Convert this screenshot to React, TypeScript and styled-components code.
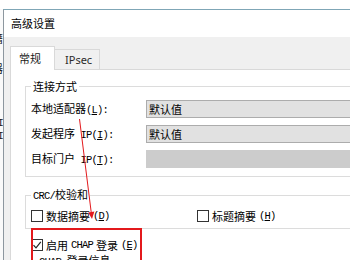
import React from 'react';
import styled, { createGlobalStyle } from 'styled-components';

const GlobalStyle = createGlobalStyle`
	html, body {
		margin: 0;
		padding: 0;
		background: #ffffff;
	}
	body {
		font-family: 'Noto Sans CJK SC', 'Noto Sans', sans-serif;
		color: #000;
	}
	* {
		box-sizing: border-box;
	}
`;

const Screen = styled.div`
	position: relative;
	width: 350px;
	height: 260px;
	overflow: hidden;
	display: flex;
	padding-top: 9px;
	background: #ffffff;
`;

// 后面窗口露出来的一小条
const BackStrip = styled.div`
	flex: none;
	width: 3px;
	overflow: hidden;
	display: flex;
	flex-direction: column;
	background: #fafafa;
`;

const BackGlyph = styled.span<{ $top: number }>`
	display: block;
	margin-top: ${(p) => p.$top}px;
	margin-left: -8px;
	font-size: 11px;
	line-height: 11px;
	white-space: nowrap;
	color: #222;
`;

const Dialog = styled.div`
	flex: 1;
	min-width: 0;
	display: flex;
	flex-direction: column;
	border-top: 1px solid #7fa6b6;
	border-left: 1px solid #8d979f;
`;

const TitleBar = styled.div`
	height: 27px;
	padding-left: 7px;
	background: #ffffff;
	font-size: 11px;
	line-height: 27px;
`;

const Body = styled.div`
	flex: 1;
	display: flex;
	flex-direction: column;
	padding-left: 6px;
	background: #f0f0f0;
`;

const TabStrip = styled.div`
	height: 32px;
	display: flex;
	align-items: flex-end;
`;

const Tab = styled.div<{ $active?: boolean }>`
	position: relative;
	z-index: ${(p) => (p.$active ? 1 : 0)};
	display: flex;
	align-items: center;
	height: ${(p) => (p.$active ? '24px' : '20px')};
	margin-bottom: ${(p) => (p.$active ? '-1px' : '0')};
	padding: ${(p) => (p.$active ? '0 0 2px 8px' : '0 0 0 10px')};
	width: 45px;
	background: ${(p) => (p.$active ? '#ffffff' : '#f0f0f0')};
	border: 1px solid #d9d9d9;
	border-bottom: none;
	border-left: ${(p) => (p.$active ? '1px solid #d9d9d9' : 'none')};
	font-size: 11px;
	color: #1a1a1a;
`;

const TabLatin = styled.span`
	font-family: 'Noto Sans', sans-serif;
	font-size: 11px;
	color: #2b2b2b;
`;

const Pane = styled.div`
	flex: 1;
	overflow: hidden;
	padding: 9px 0 0 14px;
	background: #ffffff;
	border-top: 1px solid #d9d9d9;
	border-left: 1px solid #d9d9d9;
`;

const Group = styled.fieldset<{ $top?: number; $indent?: number; $pad?: number }>`
	margin: ${(p) => p.$top ?? 0}px 0 0 ${(p) => p.$indent ?? 0}px;
	padding: 0 0 ${(p) => p.$pad ?? 8}px 5px;
	width: 420px;
	min-width: 0;
	border: 1px solid #dcdcdc;
	border-right: none;
`;

const Legend = styled.legend`
	padding: 0 2px;
	font-size: 11px;
	line-height: 14px;
`;

const Rows = styled.div`
	margin-top: 7px;
	display: flex;
	flex-direction: column;
	gap: 7px;
`;

const Row = styled.div`
	display: flex;
	align-items: center;
	height: 18px;
`;

const Label = styled.div`
	width: 115px;
	flex: none;
	font-size: 11px;
	line-height: 18px;
	white-space: nowrap;
`;

const Mono = styled.span`
	font-family: 'Liberation Mono', monospace;
	font-size: 10.5px;
	letter-spacing: -0.8px;
`;

const Field = styled.div<{ $disabled?: boolean }>`
	width: 260px;
	height: 18px;
	padding-left: 2px;
	background: ${(p) => (p.$disabled ? '#cccccc' : '#e1e1e1')};
	border: 1px solid ${(p) => (p.$disabled ? '#cccccc' : '#acacac')};
	font-size: 11px;
	line-height: 16px;
`;

const CheckLine = styled.div<{ $top?: number; $indent?: number }>`
	display: grid;
	grid-template-columns: 166px auto;
	align-items: center;
	height: 14px;
	margin: ${(p) => p.$top ?? 6}px 0 0 ${(p) => p.$indent ?? 0}px;
`;

const CheckItem = styled.div`
	display: flex;
	align-items: center;
	gap: 3px;
	font-size: 11px;
	line-height: 14px;
	white-space: nowrap;
`;

const Box = styled.span`
	flex: none;
	width: 12px;
	height: 12px;
	border: 1px solid #333;
	background: #fff;
	display: flex;
	align-items: center;
	justify-content: center;
`;

// 手画的红框和箭头
const RedFrame = styled.div`
	position: absolute;
	left: 31px;
	top: 228px;
	width: 111px;
	height: 50px;
	border: 2px solid #e3191c;
	pointer-events: none;
`;

const Overlay = styled.svg`
	position: absolute;
	left: 0;
	top: 0;
	pointer-events: none;
`;

function CheckBox({ checked }: { checked?: boolean }) {
	return (
		<Box>
			{checked && (
				<svg width="10" height="10" viewBox="0 0 10 10">
					<path d="M1.5 5.2 L4 7.8 L8.8 1.8" fill="none" stroke="#222" strokeWidth="1.2" />
				</svg>
			)}
		</Box>
	);
}

export default function App() {
	return (
		<>
			<GlobalStyle />
			<Screen>
				<BackStrip>
					<BackGlyph $top={24}>籍</BackGlyph>
					<BackGlyph $top={19}>器</BackGlyph>
					<BackGlyph $top={42}>
						<Mono>II</Mono>
					</BackGlyph>
					<BackGlyph $top={0}>
						<Mono>II</Mono>
					</BackGlyph>
				</BackStrip>
				<Dialog>
					<TitleBar>高级设置</TitleBar>
					<Body>
						<TabStrip>
							<Tab $active>常规</Tab>
							<Tab>
								<TabLatin>IPsec</TabLatin>
							</Tab>
						</TabStrip>
						<Pane>
							<Group>
								<Legend>连接方式</Legend>
								<Rows>
									<Row>
										<Label>
											本地适配器<Mono>(<u>L</u>):</Mono>
										</Label>
										<Field>默认值</Field>
									</Row>
									<Row>
										<Label>
											发起程序<Mono> IP(<u>I</u>):</Mono>
										</Label>
										<Field>默认值</Field>
									</Row>
									<Row>
										<Label>
											目标门户<Mono> IP(<u>T</u>):</Mono>
										</Label>
										<Field $disabled />
									</Row>
								</Rows>
							</Group>
							<Group $top={10} $pad={5}>
								<Legend>
									<Mono>CRC/</Mono>校验和
								</Legend>
								<CheckLine>
									<CheckItem>
										<CheckBox />
										数据摘要<Mono>(<u>D</u>)</Mono>
									</CheckItem>
									<CheckItem>
										<CheckBox />
										标题摘要<Mono>(<u>H</u>)</Mono>
									</CheckItem>
								</CheckLine>
							</Group>
							<CheckLine $top={9} $indent={6}>
								<CheckItem>
									<CheckBox checked />
									启用<Mono> CHAP </Mono>登录<Mono>(<u>E</u>)</Mono>
								</CheckItem>
							</CheckLine>
							<Group $top={1} $indent={6}>
								<Legend>
									<Mono>CHAP </Mono>登录信息
								</Legend>
								<Rows>
									<Row />
								</Rows>
							</Group>
						</Pane>
					</Body>
				</Dialog>
				<RedFrame />
				<Overlay width="350" height="260" viewBox="0 0 350 260">
					<line x1="79.5" y1="119" x2="91.3" y2="213" stroke="#e3191c" strokeWidth="1" />
					<polygon points="92,219 88.2,212.4 94.4,211.6" fill="#e3191c" />
				</Overlay>
			</Screen>
		</>
	);
}
